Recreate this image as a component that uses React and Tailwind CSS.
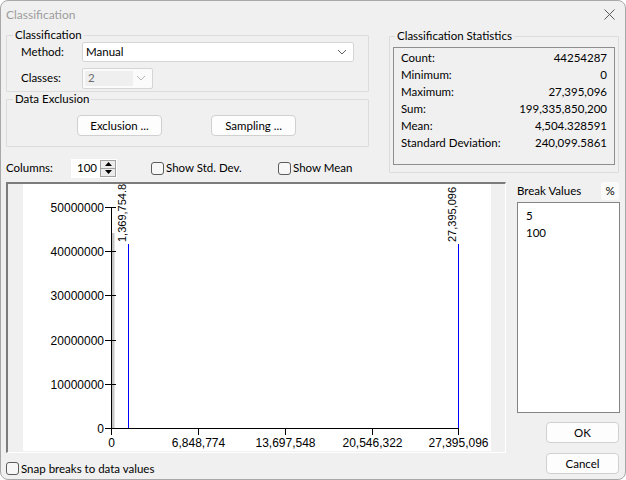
import React from 'react';

const stats = [
  ['Count:', '44254287'],
  ['Minimum:', '0'],
  ['Maximum:', '27,395,096'],
  ['Sum:', '199,335,850,200'],
  ['Mean:', '4,504.328591'],
  ['Standard Deviation:', '240,099.5861'],
];

const yTicks = [50000000, 40000000, 30000000, 20000000, 10000000, 0];
const xTicks = ['0', '6,848,774', '13,697,548', '20,546,322', '27,395,096'];

function Chevron({ color = '#606060' }) {
  return (
    <svg width="10" height="6" viewBox="0 0 10 6" className="shrink-0">
      <path d="M1 1 L5 5 L9 1" fill="none" stroke={color} strokeWidth="1" />
    </svg>
  );
}

function Checkbox({ label, className = '' }) {
  return (
    <div className={'flex items-center ' + className}>
      <div className="w-[13px] h-[13px] shrink-0 border border-[#5c5c5c] rounded-[3px] bg-[#f7f7f7]" />
      <span className="ml-[2px]">{label}</span>
    </div>
  );
}

function Button({ children, className = '' }) {
  return (
    <div
      className={
        'h-[21px] flex items-center justify-center bg-[#fdfdfd] border border-[#d0d0d0] rounded-[4px] ' +
        className
      }
    >
      {children}
    </div>
  );
}

function Group({ title, children, className = '', legendClass = 'ml-[6px]' }) {
  return (
    <fieldset className={'border border-[#dcdcdc] rounded-[1px] ' + className}>
      <legend className={'px-[2px] leading-[14px] ' + legendClass}>{title}</legend>
      {children}
    </fieldset>
  );
}

function Histogram() {
  const yOf = (v) => 244 - (v / 10000000) * 44.2;
  const xs = [88.5, 175.5, 262.5, 349.5, 435.5];
  return (
    <svg width="468" height="267" className="block bg-white" fontFamily="'Liberation Sans', Arial, sans-serif">
      {/* grey first bin */}
      <rect x="89" y="49" width="2.5" height="195" fill="#c4c4c4" />
      {/* y axis */}
      <line x1="88.5" y1="23" x2="88.5" y2="244.5" stroke="#000" />
      {yTicks.map((v) => {
        const y = Math.round(yOf(v)) + 0.5;
        return (
          <g key={v}>
            <line x1="82" y1={y} x2="93" y2={y} stroke="#000" />
            <text x="81" y={y + 4} fontSize="12" textAnchor="end" fill="#000">
              {v}
            </text>
          </g>
        );
      })}
      {/* x axis */}
      <line x1="88" y1="244.5" x2="436" y2="244.5" stroke="#000" />
      {xs.map((x, i) => (
        <g key={x}>
          <line x1={x} y1="244" x2={x} y2="251" stroke="#000" />
          <text x={x} y="263" fontSize="12" textAnchor="middle" fill="#000">
            {xTicks[i]}
          </text>
        </g>
      ))}
      {/* break lines */}
      <line x1="105.5" y1="60" x2="105.5" y2="244" stroke="#0000ff" />
      <line x1="435.5" y1="60" x2="435.5" y2="244" stroke="#0000ff" />
      <text transform="translate(103 58) rotate(-90)" fontSize="11" fill="#000">
        1,369,754.8
      </text>
      <text transform="translate(433 58) rotate(-90)" fontSize="11" fill="#000">
        27,395,096
      </text>
    </svg>
  );
}

export default function App() {
  return (
    <div className="w-[626px] h-[480px] bg-[#f0f0f0] border border-[#a8a8a8] rounded-[8px] overflow-hidden flex flex-col text-[11.5px] text-black font-[Lato,'Noto_Sans',sans-serif]">
      {/* title bar */}
      <div className="h-[27px] shrink-0 flex items-center justify-between pl-[5px] pr-[10px]">
        <span className="text-[#9c9c9c] text-[12px]">Classification</span>
        <svg width="11" height="11" viewBox="0 0 11 11">
          <path d="M0.5 0.5 L10.5 10.5 M10.5 0.5 L0.5 10.5" stroke="#5a5a5a" strokeWidth="1" />
        </svg>
      </div>

      {/* top section */}
      <div className="flex items-start px-[5px]">
        <div className="w-[363px] flex flex-col">
          <Group title="Classification" className="pb-[3px]">
            <div className="flex items-center pl-[14px] h-[20px]">
              <span className="w-[61px]">Method:</span>
              <div className="w-[272px] h-[20px] bg-white border border-[#d5d5d5] rounded-[2px] flex items-center justify-between pl-[3px] pr-[6px]">
                <span>Manual</span>
                <Chevron />
              </div>
            </div>
            <div className="flex items-center pl-[14px] h-[20px] mt-[6px]">
              <span className="w-[61px]">Classes:</span>
              <div className="w-[71px] h-[21px] bg-[#fbfbfb] border border-[#d5d5d5] rounded-[2px] flex items-center justify-between pl-[2px] pr-[6px]">
                <span className="w-[48px] h-[15px] bg-[#efefef] text-[#6d6d6d] flex items-center pl-[3px]">2</span>
                <Chevron color="#b8b8b8" />
              </div>
            </div>
          </Group>
          <Group title="Data Exclusion" className="pb-[10px]">
            <div className="flex mt-[9px] pl-[70px]">
              <Button className="w-[85px]">Exclusion ...</Button>
              <Button className="w-[85px] ml-[49px]">Sampling ...</Button>
            </div>
          </Group>
          <div className="flex items-center h-[20px] mt-[11px]">
            <span className="w-[65px]">Columns:</span>
            <div className="flex items-center w-[46px] h-[19px] bg-white pl-[6px] pr-[1px]">
              <span className="flex-1">100</span>
              <div className="w-[16px] h-[17px] flex flex-col border border-[#a0a0a0] bg-[#ececec]">
                <div className="flex-1 flex items-center justify-center border-b border-[#a0a0a0]">
                  <svg width="7" height="4" viewBox="0 0 7 4"><path d="M3.5 0 L7 4 L0 4 Z" fill="#000" /></svg>
                </div>
                <div className="flex-1 flex items-center justify-center">
                  <svg width="7" height="4" viewBox="0 0 7 4"><path d="M0 0 L7 0 L3.5 4 Z" fill="#000" /></svg>
                </div>
              </div>
            </div>
            <Checkbox label="Show Std. Dev." className="ml-[34px] w-[127px]" />
            <Checkbox label="Show Mean" />
          </div>
        </div>

        <Group title="Classification Statistics" className="ml-[20px] w-[230px] mt-[1px] pb-[7px]" legendClass="ml-[5px]">
          <div className="mx-[3px] mt-[4px] h-[118px] border border-[#8e8e8e] pt-[1px] px-[7px]">
            {stats.map(([k, v]) => (
              <div key={k} className="flex justify-between h-[17px] items-center">
                <span>{k}</span>
                <span>{v}</span>
              </div>
            ))}
          </div>
        </Group>
      </div>

      {/* histogram + break values */}
      <div className="flex px-[5px] mt-[4px]">
        <div className="w-[500px] flex flex-col">
          <div className="h-[271px] border-t-2 border-l-2 border-[#7c7c7c] border-r border-b border-r-white border-b-white pl-[15px] pr-[14px] pb-[1px] bg-[#f0f0f0]">
            <Histogram />
          </div>
          <Checkbox label="Snap breaks to data values" className="mt-[7px]" />
        </div>

        <div className="ml-[11px] w-[104px] flex flex-col">
          <div className="h-[18px] flex items-center justify-between">
            <span>Break Values</span>
            <div className="w-[18px] h-[18px] rounded-[3px] bg-[#fafafa] flex items-center justify-center mr-[1px]">%</div>
          </div>
          <div className="mt-[2px] h-[211px] bg-white border border-[#848484] pl-[8px] pt-[4px]">
            <div className="leading-[17px]">5</div>
            <div className="leading-[17px]">100</div>
          </div>
          <Button className="w-[73px] self-end mr-[1px] mt-[9px]">OK</Button>
          <Button className="w-[73px] self-end mr-[1px] mt-[10px]">Cancel</Button>
        </div>
      </div>
    </div>
  );
}
